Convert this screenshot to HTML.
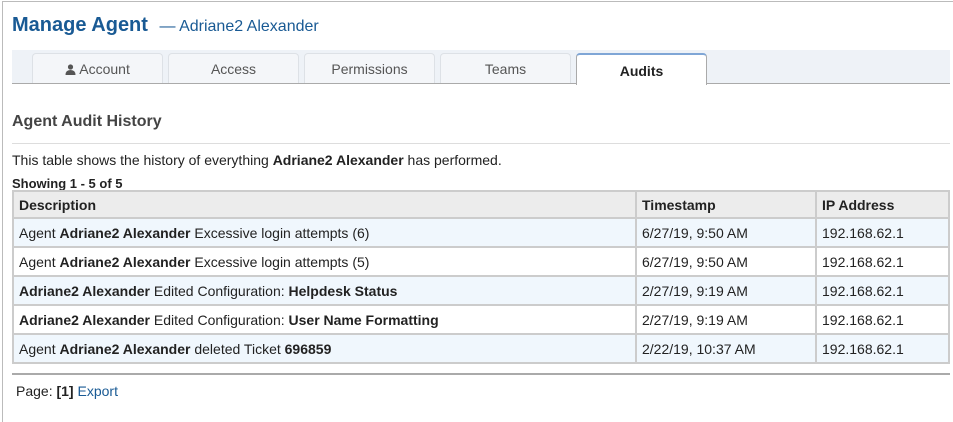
<!DOCTYPE html>
<html><head><style>
body{margin:0;width:953px;height:405px;overflow:hidden;background:#fff;font-family:"Liberation Sans",Arial,sans-serif;font-size:14px;color:#222;}
.page{position:absolute;left:2px;top:1px;width:960px;height:420px;border-left:1px solid #bbb;border-top:1px solid #bbb;}
h1{position:absolute;left:12px;top:14px;margin:0;font-size:20px;color:#195a94;font-weight:bold;}
h1 span{font-weight:normal;font-size:16px;margin-left:6px;}
.bar{position:absolute;left:12px;top:50px;width:938px;height:33px;background:#eef2f7;border-bottom:1px solid #aaa;}
.tab{position:absolute;top:3px;width:131px;height:30px;border:1px solid #dde1e6;border-bottom:none;border-radius:4px 4px 0 0;background:#f4f6f9;text-align:center;line-height:31px;color:#555;font-size:14px;box-sizing:border-box;}
.tab.act{background:#fff;border:1px solid #aaa;border-top:2px solid #7fa6d6;border-bottom:none;height:32px;color:#222;font-weight:bold;line-height:33px;}
h2{position:absolute;left:12px;top:113px;margin:0;font-size:16px;color:#444;}
.hr1{position:absolute;left:12px;top:143px;width:938px;border-top:1px solid #ddd;}
.intro{position:absolute;left:12px;top:152px;}
.show{position:absolute;left:12px;top:176px;font-weight:bold;font-size:13px;}
table{position:absolute;left:12px;top:190px;width:938px;border-collapse:collapse;border:2px solid #ccc;table-layout:fixed;}
td,th{border:2px solid #ccc;padding:0 5px;text-align:left;font-size:14px;}
th{background:#ececec;height:25px;}
td{height:27px;}
tr.b td{background:#f0f7fd;}
.hr2{position:absolute;left:12px;top:373px;width:938px;border-top:2px solid #aaa;}
.pg{position:absolute;left:16px;top:383px;}
a{color:#195a94;text-decoration:none;}
</style></head><body>
<div class="page"></div>
<h1>Manage Agent <span>— Adriane2 Alexander</span></h1>
<div class="bar">
<div class="tab" style="left:20px"><svg width="11" height="11" viewBox="0 0 11 11" style="vertical-align:-1px"><circle cx="5.5" cy="3" r="2.6" fill="#555"/><path d="M0.5 11 Q0.5 6 5.5 6 Q10.5 6 10.5 11Z" fill="#555"/></svg> Account</div>
<div class="tab" style="left:156px">Access</div>
<div class="tab" style="left:292px">Permissions</div>
<div class="tab" style="left:428px">Teams</div>
<div class="tab act" style="left:564px">Audits</div>
</div>
<h2>Agent Audit History</h2>
<div class="hr1"></div>
<div class="intro">This table shows the history of everything <b>Adriane2 Alexander</b> has performed.</div>
<div class="show">Showing 1 - 5 of 5</div>
<table>
<colgroup><col style="width:623px"><col style="width:180px"><col></colgroup>
<tr><th>Description</th><th>Timestamp</th><th>IP Address</th></tr>
<tr class="b"><td>Agent <b>Adriane2 Alexander</b> Excessive login attempts (6)</td><td>6/27/19, 9:50 AM</td><td>192.168.62.1</td></tr>
<tr><td>Agent <b>Adriane2 Alexander</b> Excessive login attempts (5)</td><td>6/27/19, 9:50 AM</td><td>192.168.62.1</td></tr>
<tr class="b"><td><b>Adriane2 Alexander</b> Edited Configuration: <b>Helpdesk Status</b></td><td>2/27/19, 9:19 AM</td><td>192.168.62.1</td></tr>
<tr><td><b>Adriane2 Alexander</b> Edited Configuration: <b>User Name Formatting</b></td><td>2/27/19, 9:19 AM</td><td>192.168.62.1</td></tr>
<tr class="b"><td>Agent <b>Adriane2 Alexander</b> deleted Ticket <b>696859</b></td><td>2/22/19, 10:37 AM</td><td>192.168.62.1</td></tr>
</table>
<div class="hr2"></div>
<div class="pg">Page: <b>[1]</b> <a>Export</a></div>
</body></html>
